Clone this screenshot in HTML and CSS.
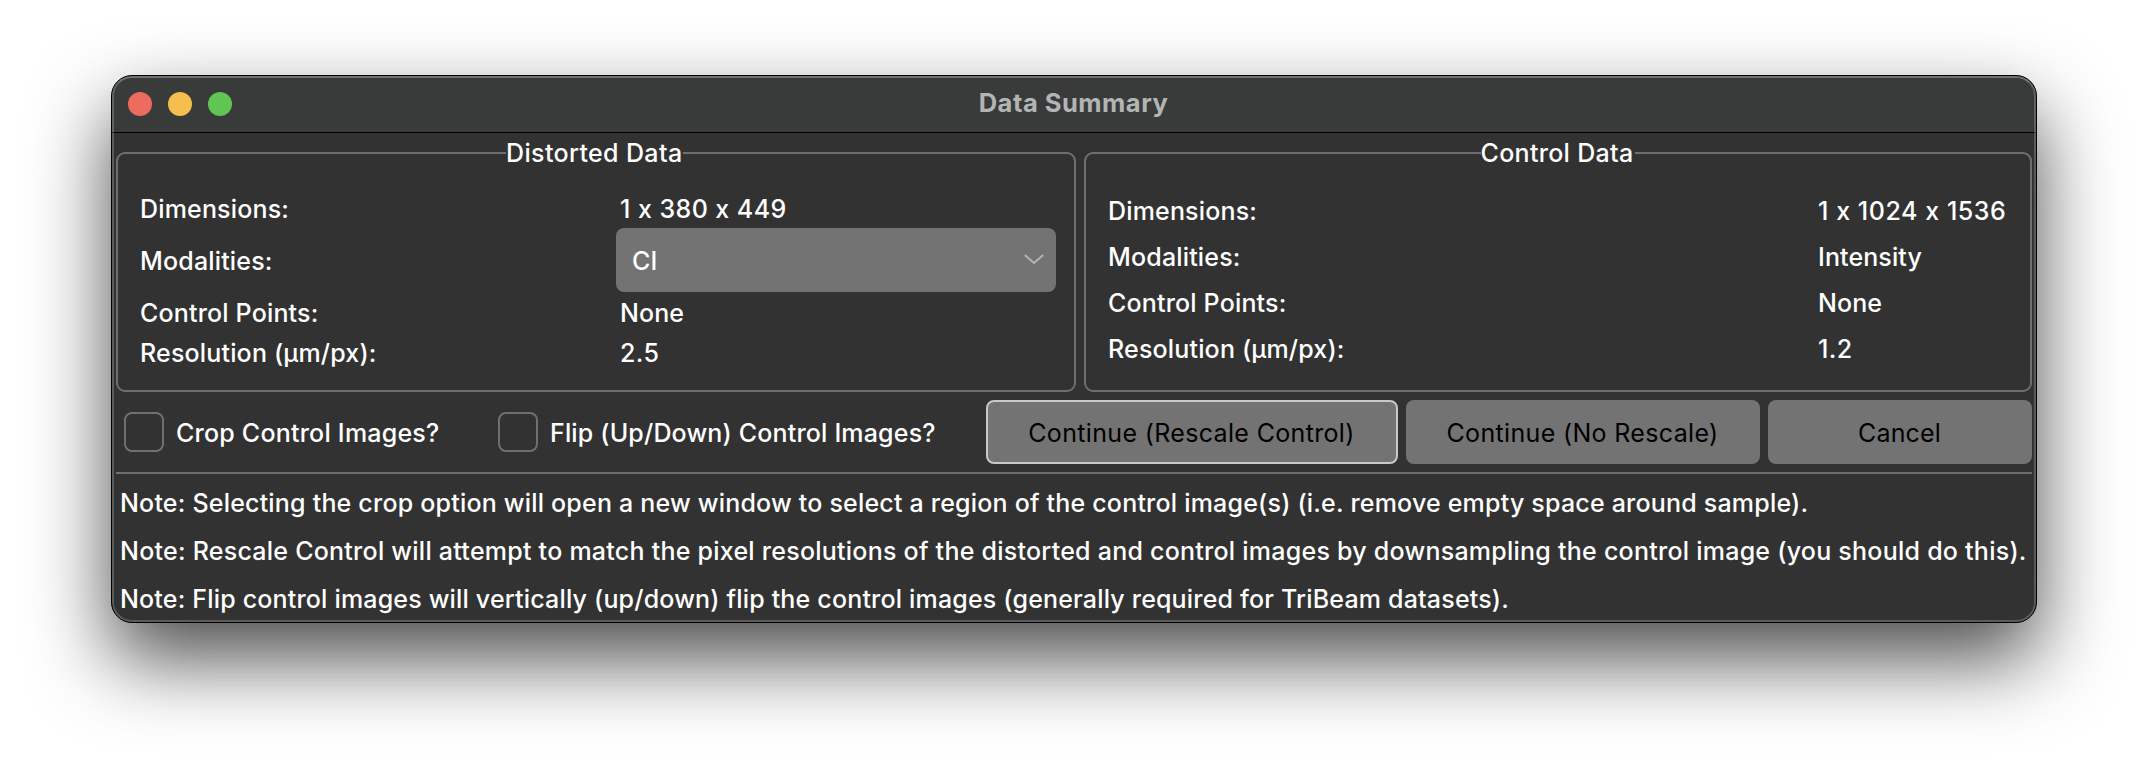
FILE: index.html
```html
<!DOCTYPE html>
<html lang="en">
<head>
<meta charset="utf-8">
<title>Data Summary</title>
<link rel="stylesheet" href="styles.css">
</head>
<body>
<main class="window">
  <header class="titlebar">
    <div class="lights">
      <span class="light close"></span>
      <span class="light minimize"></span>
      <span class="light zoom"></span>
    </div>
    <h1 class="title">Data Summary</h1>
  </header>
  <div class="content">
    <div class="groups">
      <fieldset class="group distorted">
        <legend class="legend">Distorted Data</legend>
        <div class="fields">
          <span class="text">Dimensions:</span><span class="text value digits">1 x 380 x 449</span>
          <span class="text">Modalities:</span>
          <div class="combo">
            <span class="text tight">CI</span>
            <svg class="chevron" width="20" height="11" viewBox="0 0 20 11"><path d="M0.8 1 L10 9 L19.2 1" fill="none" stroke="#b4b4b4" stroke-width="2"/></svg>
          </div>
          <span class="text">Control Points:</span><span class="text value tight">None</span>
          <span class="text">Resolution (µm/px):</span><span class="text value digits">2.5</span>
        </div>
      </fieldset>
      <fieldset class="group control">
        <legend class="legend">Control Data</legend>
        <div class="fields">
          <span class="text">Dimensions:</span><span class="text digits-wide">1 x 1024 x 1536</span>
          <span class="text">Modalities:</span><span class="text tight">Intensity</span>
          <span class="text">Control Points:</span><span class="text tight">None</span>
          <span class="text">Resolution (µm/px):</span><span class="text digits">1.2</span>
        </div>
      </fieldset>
    </div>
    <div class="actions">
      <label class="check crop"><span class="box"></span><span class="text">Crop Control Images?</span></label>
      <label class="check flip"><span class="box"></span><span class="text">Flip (Up/Down) Control Images?</span></label>
      <button class="button default"><span class="text">Continue (Rescale Control)</span></button>
      <button class="button plain"><span class="text">Continue (No Rescale)</span></button>
      <button class="button cancel"><span class="text">Cancel</span></button>
    </div>
    <div class="notes">
      <p class="text note-crop">Note: Selecting the crop option will open a new window to select a region of the control image(s) (i.e. remove empty space around sample).</p>
      <p class="text note-rescale">Note: Rescale Control will attempt to match the pixel resolutions of the distorted and control images by downsampling the control image (you should do this).</p>
      <p class="text note-flip">Note: Flip control images will vertically (up/down) flip the control images (generally required for TriBeam datasets).</p>
    </div>
  </div>
</main>
</body>
</html>
```
FILE: styles.css
```css
* { box-sizing: border-box; }

body {
  margin: 0;
  height: 770px;
  padding: 75px 0 0 111px;
  overflow: hidden;
  background: #fff;
  color: #fff;
  font: 500 25px/30px Inter, "Liberation Sans", sans-serif;
}

.window {
  width: 1926px;
  height: 548px;
  border: 1px solid #000;
  border-radius: 21px;
  overflow: hidden;
  background: #323232;
  box-shadow: 0 36px 80px rgba(0, 0, 0, .7);
  position: relative;
}

/* Light rim just inside the window edge */
.window::after {
  content: "";
  position: absolute;
  inset: 0;
  border: 2px solid rgba(255, 255, 255, .2);
  border-top-color: rgba(255, 255, 255, .28);
  border-radius: 20px;
  pointer-events: none;
}

.titlebar {
  height: 57px;
  display: grid;
  grid-template-columns: 1fr auto 1fr;
  align-items: center;
  padding: 0 16px;
  background: #393b3a;
  border-bottom: 1px solid #000;
}

.lights { display: flex; gap: 16px; }
.light { width: 24px; height: 24px; border-radius: 50%; }
.close { background: #ec6a5e; }
.minimize { background: #f4bf4f; }
.zoom { background: #61c554; }

.title {
  margin: 0 1px 3px 0;
  color: #b3b5b4;
  font-size: 25.5px;
  font-weight: 700;
  line-height: 30px;
  letter-spacing: .5px;
}

.content { padding: 4px 4px 0; }

.text {
  padding-top: 2px;
  white-space: nowrap;
  letter-spacing: .17px;
}
.tight { letter-spacing: .1px; }
.digits { letter-spacing: .44px; }
.digits-wide { letter-spacing: .55px; }

.groups { display: flex; gap: 8px; height: 255px; }

.group {
  margin: 0;
  min-width: 0;
  height: 255px;
  padding: 0 18px;
  border: 2px solid #6f6f6f;
  border-radius: 9px;
}
.distorted { width: 960px; }
.control { width: 948px; }

.legend {
  height: 32px;
  margin: 0 auto 0 370px;
  padding: 1px 1px 0 0;
  white-space: nowrap;
  letter-spacing: .36px;
}
.control .legend {
  margin: 0 auto;
  padding-right: 2px;
  letter-spacing: .3px;
}

.fields { display: grid; align-items: center; padding-left: 4px; }
.distorted .fields {
  grid-template-columns: 476px 440px;
  grid-template-rows: 40px 64px 40px 40px;
  padding-top: 19px;
}
.control .fields {
  grid-template-columns: 710px 1fr;
  grid-template-rows: repeat(4, 46px);
  padding-top: 18px;
}
.value { padding-left: 4px; }

.combo {
  height: 64px;
  display: flex;
  align-items: center;
  justify-content: space-between;
  padding: 0 12px 0 16px;
  border-radius: 8px;
  background: #737373;
}
.chevron { display: block; margin-bottom: 1px; }

.actions {
  display: flex;
  align-items: center;
  height: 64px;
  margin-top: 8px;
}

.check { display: flex; align-items: center; gap: 12px; margin-left: 8px; }
.crop { width: 374px; }
.flip { width: 480px; margin: 0 8px 0 0; }
.crop .text { letter-spacing: .22px; }
.box {
  width: 40px;
  height: 40px;
  border: 2px solid #6f6f6f;
  border-radius: 8px;
}

.button {
  height: 64px;
  display: flex;
  align-items: center;
  justify-content: center;
  padding: 0 1px 0 0;
  border: 0;
  border-radius: 8px;
  background: #737373;
  color: #000;
  font: inherit;
  font-weight: 400;
}
.button .text { letter-spacing: .34px; }
.default { width: 412px; border: 2px solid #c8c8c8; }
.plain { width: 354px; margin-left: 8px; }
.cancel { width: 264px; margin-left: 8px; }
.cancel .text { letter-spacing: .15px; }

.notes { margin-top: 8px; padding: 4px 4px 0; border-top: 2px solid #6f6f6f; }
.notes p { margin: 0; height: 48px; line-height: 46px; }
.notes .note-crop { letter-spacing: .2px; }
.notes .note-rescale { letter-spacing: .245px; }
.notes .note-flip { letter-spacing: .18px; }
```
